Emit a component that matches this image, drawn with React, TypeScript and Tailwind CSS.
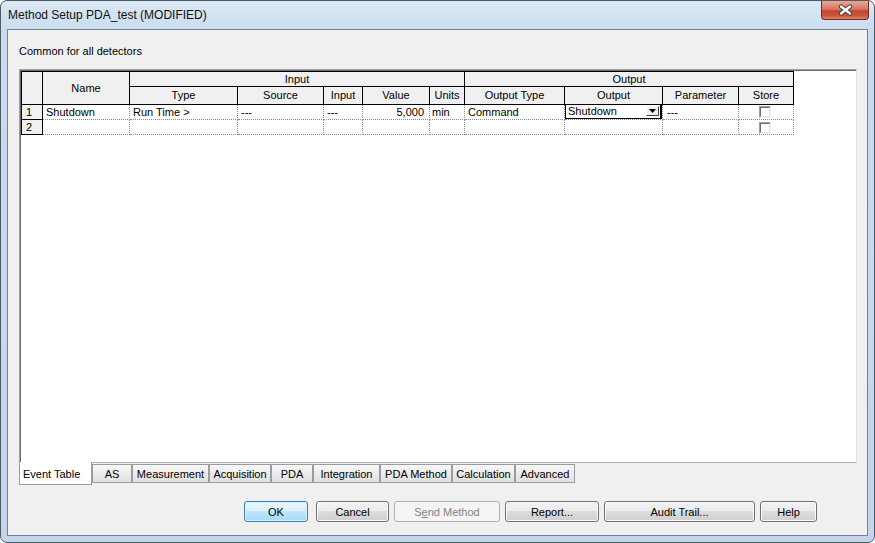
import React from 'react';

const FONT = "font-['Liberation_Sans',Arial,sans-serif]";

const TABS = [
  { label: 'AS', w: 'w-[40px]' },
  { label: 'Measurement', w: 'w-[77px]' },
  { label: 'Acquisition', w: 'w-[62px]' },
  { label: 'PDA', w: 'w-[42px]' },
  { label: 'Integration', w: 'w-[67px]' },
  { label: 'PDA Method', w: 'w-[72px]' },
  { label: 'Calculation', w: 'w-[63px]' },
  { label: 'Advanced', w: 'w-[60px]' },
];

const head = 'flex items-center justify-center border-r border-b border-black bg-[#f0f0f0] leading-none';
const cell = 'flex items-center border-r border-b border-dotted border-[#8a8a8a] leading-none whitespace-nowrap';
const rowNum = 'flex items-center pl-[4px] border-r border-b border-black bg-[#f0f0f0] leading-none';

function CheckBox(): React.ReactElement {
  return (
    <div className="h-[12px] w-[12px] border border-t-[#a0a0a0] border-l-[#a0a0a0] border-r-[#f4f4f4] border-b-[#f4f4f4]">
      <div className="h-full w-full border border-t-[#6d6d6d] border-l-[#6d6d6d] border-r-[#e3e3e3] border-b-[#e3e3e3] bg-white" />
    </div>
  );
}

function OutputCombo(): React.ReactElement {
  return (
    <div className="absolute -top-[1px] left-0 right-0 bottom-0 flex items-center border border-r-2 border-black bg-white pl-[2px]">
      Shutdown
      <div className="absolute right-[1px] top-[1px] flex h-[10px] w-[13px] items-center justify-center border border-t-white border-l-white border-r-[#404040] border-b-[#404040] bg-[#f0f0f0]">
        <svg width="7" height="4" viewBox="0 0 7 4">
          <polygon points="0,0 7,0 3.5,4" fill="#000" />
        </svg>
      </div>
    </div>
  );
}

function EventGrid(): React.ReactElement {
  return (
    <div className="grid w-max grid-cols-[21px_87px_108px_86px_39px_67px_35px_100px_98px_76px_55px] grid-rows-[15px_18px_15px_15px] border-l border-t border-black text-[11px] text-black">
      <div className={`${head} row-span-2`} />
      <div className={`${head} row-span-2`}>Name</div>
      <div className={`${head} col-span-5 pt-[1px]`}>Input</div>
      <div className={`${head} col-span-4 pt-[1px]`}>Output</div>
      <div className={head}>Type</div>
      <div className={head}>Source</div>
      <div className={head}>Input</div>
      <div className={head}>Value</div>
      <div className={head}>Units</div>
      <div className={head}>Output Type</div>
      <div className={head}>Output</div>
      <div className={head}>Parameter</div>
      <div className={head}>Store</div>

      {/* row 1 */}
      <div className={rowNum}>1</div>
      <div className={`${cell} pl-[3px]`}>Shutdown</div>
      <div className={`${cell} pl-[3px]`}>Run Time &gt;</div>
      <div className={`${cell} pl-[3px]`}>---</div>
      <div className={`${cell} pl-[3px]`}>---</div>
      <div className={`${cell} justify-end pr-[5px]`}>5,000</div>
      <div className={`${cell} pl-[2px]`}>min</div>
      <div className={`${cell} pl-[3px]`}>Command</div>
      <div className={`${cell} relative`}>
        <OutputCombo />
      </div>
      <div className={`${cell} pl-[4px]`}>---</div>
      <div className={`${cell} pl-[20px]`}>
        <CheckBox />
      </div>

      {/* row 2 */}
      <div className={rowNum}>2</div>
      <div className={cell} />
      <div className={cell} />
      <div className={cell} />
      <div className={cell} />
      <div className={cell} />
      <div className={cell} />
      <div className={cell} />
      <div className={cell} />
      <div className={cell} />
      <div className={`${cell} items-end pl-[20px]`}>
        <CheckBox />
      </div>
    </div>
  );
}

type BtnProps = {
  label: React.ReactNode;
  w: string;
  ml: string;
  kind?: 'default' | 'disabled' | 'normal';
};

function DlgButton({ label, w, ml, kind = 'normal' }: BtnProps): React.ReactElement {
  let look =
    'border-[#707070] text-black bg-[linear-gradient(to_bottom,#f2f2f2_0%,#ebebeb_50%,#dddddd_50%,#cfcfcf_100%)] shadow-[inset_0_0_0_1px_#fcfcfc]';
  if (kind === 'default') {
    look =
      'border-[#3c7fb1] text-black bg-[linear-gradient(to_bottom,#eaf6fd_0%,#d9f0fc_50%,#bee6fd_50%,#a7d9f5_100%)] shadow-[inset_0_0_0_1px_#d6efff]';
  }
  if (kind === 'disabled') {
    look = 'border-[#adb2b5] text-[#838383] bg-[#f4f4f4]';
  }
  return (
    <div
      className={`${w} ${ml} flex h-[21px] items-center justify-center rounded-[3px] border pt-[1px] text-[11px] ${look}`}
    >
      {label}
    </div>
  );
}

export default function App(): React.ReactElement {
  return (
    <div className={`${FONT} relative flex h-[543px] w-[875px] flex-col overflow-hidden rounded-[7px] border border-[#4f5966] bg-[linear-gradient(to_bottom,#dce8f5_0px,#c9dcef_30px,#c2d6eb_100%)]`}>
      {/* title bar */}
      <div className="flex h-[28px] items-center pl-[7px] text-[12px] text-[#111]">
        Method Setup PDA_test (MODIFIED)
      </div>
      <div className="absolute left-[820px] top-0 flex h-[19px] w-[48px] items-center justify-center rounded-b-[4px] border border-t-0 border-[#6e2a20] bg-[linear-gradient(to_bottom,#e9a898_0%,#d87862_45%,#c54530_55%,#cc5438_80%,#de8466_100%)]">
        <svg width="17" height="12" viewBox="0 0 17 12">
          <path d="M4 2.5 L13 9.5 M13 2.5 L4 9.5" stroke="#3f3f3f" strokeWidth="4.4" strokeLinecap="round" />
          <path d="M4 2.5 L13 9.5 M13 2.5 L4 9.5" stroke="#ffffff" strokeWidth="2.4" strokeLinecap="round" />
        </svg>
      </div>

      {/* client area */}
      <div className="mx-[6px] flex h-[507px] flex-col border border-[#76828f] bg-[#f0f0f0] text-[11px] text-black">
        <div className="ml-[11px] mt-[15px] h-[13px] leading-[13px]">Common for all detectors</div>

        <div className="ml-[11px] mt-[11px] h-[394px] w-[838px] border border-[#a0a0a0] border-r-[#e3e3e3] border-b-[#b5b5b5]">
          <div className="h-full w-full border-l border-t border-[#6d6d6d] bg-white">
            <EventGrid />
          </div>
        </div>

        {/* tabs */}
        <div className="ml-[11px] flex h-[22px] items-start">
          <div className="-mt-[1px] flex h-[23px] w-[73px] items-center border border-t-0 border-[#9c9c9c] bg-white pl-[3px] pt-[3px]">
            Event Table
          </div>
          {TABS.map((t) => (
            <div
              key={t.label}
              className={`${t.w} mt-[1px] flex h-[19px] items-center justify-center border border-[#9a9ca1] bg-[linear-gradient(to_bottom,#f7f7f7_0%,#ececec_50%,#e0e0e0_100%)] pt-[1px] whitespace-nowrap`}
            >
              {t.label}
            </div>
          ))}
        </div>

        {/* buttons */}
        <div className="mt-[16px] flex pl-[236px]">
          <DlgButton label="OK" w="w-[64px]" ml="ml-0" kind="default" />
          <DlgButton label="Cancel" w="w-[73px]" ml="ml-[8px]" />
          <DlgButton
            label={
              <span>
                S<span className="underline">e</span>nd Method
              </span>
            }
            w="w-[106px]"
            ml="ml-[5px]"
            kind="disabled"
          />
          <DlgButton label="Report..." w="w-[94px]" ml="ml-[5px]" />
          <DlgButton label="Audit Trail..." w="w-[151px]" ml="ml-[5px]" />
          <DlgButton label="Help" w="w-[57px]" ml="ml-[5px]" />
        </div>
      </div>
    </div>
  );
}
